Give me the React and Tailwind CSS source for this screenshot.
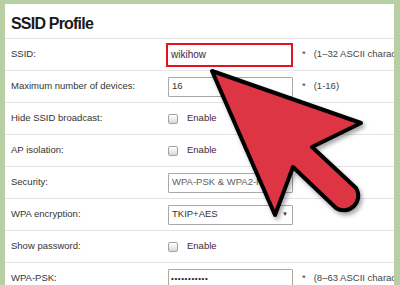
import React from 'react';

const rows = [
  { label: 'SSID:', kind: 'ssid', hint: '(1–32 ASCII characters)' },
  { label: 'Maximum number of devices:', kind: 'text', value: '16', hint: '(1-16)' },
  { label: 'Hide SSID broadcast:', kind: 'check' },
  { label: 'AP isolation:', kind: 'check' },
  { label: 'Security:', kind: 'select', value: 'WPA-PSK & WPA2-PSK', muted: true },
  { label: 'WPA encryption:', kind: 'select', value: 'TKIP+AES', caret: true },
  { label: 'Show password:', kind: 'check' },
  { label: 'WPA-PSK:', kind: 'password', hint: '(8–63 ASCII characters)' },
];

function Control({ row }) {
  if (row.kind === 'ssid') {
    return (
      <div className="ml-[-2px] flex h-[24px] w-[127px] shrink-0 items-center border-2 border-[#e2141f] bg-white pl-[3px] text-[10px] text-[#3a2742]">
        wikihow
      </div>
    );
  }
  if (row.kind === 'check') {
    return (
      <div className="flex shrink-0 items-center">
        <div className="h-[10px] w-[10px] rounded-[2px] border border-[#a3a3a3] bg-gradient-to-b from-white to-[#d9d9d9]" />
        <span className="ml-[9px] text-[9.5px] text-[#4a2432]">Enable</span>
      </div>
    );
  }
  if (row.kind === 'password') {
    return (
      <div className="flex h-[20px] w-[125px] shrink-0 items-center rounded-[1px] border border-[#a9a9a9] pl-[2px] text-[8px] tracking-[0.6px] text-[#222]">
        •••••••••••
      </div>
    );
  }
  return (
    <div className="flex h-[20px] w-[125px] shrink-0 items-center justify-between rounded-[1px] border border-[#a9a9a9] bg-white pl-[3px] pr-[4px] text-[9.5px]">
      <span className={row.muted ? 'text-[#5e5e5e]' : 'text-[#333]'}>{row.value}</span>
      {row.caret && <span className="text-[6px] text-[#333]">▼</span>}
    </div>
  );
}

export default function App() {
  return (
    <div className="relative h-[285px] w-[400px] overflow-hidden bg-[#b8cfa3] font-['Liberation_Sans',Arial,sans-serif]">
      <div className="ml-[5px] mt-[4px] h-[281px] w-[389px] overflow-hidden bg-white">
        <div className="h-[35px] border-b border-[#e4e4e4] pl-[6px] pt-[10px] text-[16px] font-bold leading-[20px] tracking-[-0.8px] text-[#1a1a1a]">
          SSID Profile
        </div>
        {rows.map((row) => (
          <div key={row.label} className="flex h-[32px] items-center border-b border-[#e4e4e4] pl-[6px] whitespace-nowrap">
            <div className="w-[157px] shrink-0 text-[9.5px] text-[#333]">{row.label}</div>
            <Control row={row} />
            {row.hint && (
              <div className="ml-[9px] flex shrink-0 text-[9.5px] text-[#444]">
                <span>*</span>
                <span className="ml-[8px]">{row.hint}</span>
              </div>
            )}
          </div>
        ))}
      </div>

      <svg className="pointer-events-none absolute left-0 top-0" width="400" height="285" viewBox="0 0 400 285">
        <defs>
          <filter id="sh" x="-20%" y="-20%" width="140%" height="140%">
            <feDropShadow dx="2" dy="3" stdDeviation="2" floodColor="#000" floodOpacity="0.35" />
          </filter>
        </defs>
        <path
          d="M212 71 L361 123 L312 147 L356 188 A14.5 14.5 0 0 1 336 208 L293 167 L275 215 Z"
          fill="#de3444"
          stroke="#000"
          strokeWidth="4"
          strokeLinejoin="round"
          filter="url(#sh)"
        />
      </svg>
    </div>
  );
}
